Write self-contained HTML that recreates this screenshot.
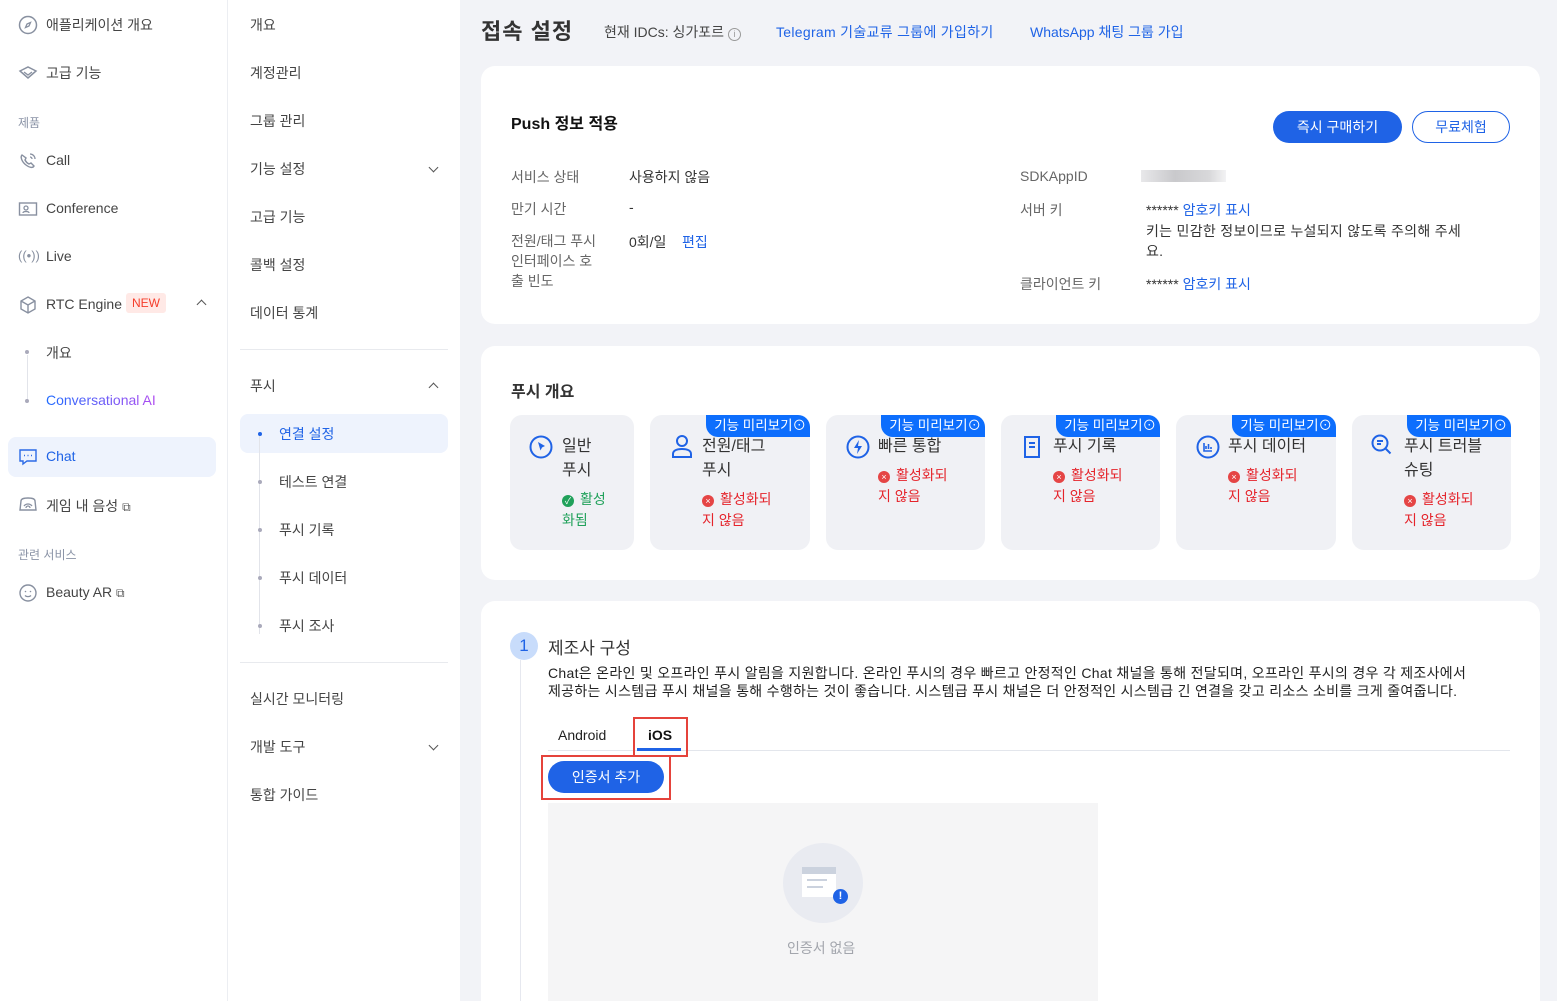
<!DOCTYPE html>
<html><head><meta charset="utf-8"><style>
*{box-sizing:border-box;margin:0;padding:0}
html,body{width:1557px;height:1001px;overflow:hidden}
body{background:#f2f3f7;font-family:"Liberation Sans","Noto Sans CJK KR",sans-serif;font-size:14px;color:#333;position:relative}
.a{position:absolute;white-space:nowrap}
#s1{position:absolute;left:0;top:0;width:228px;height:1001px;background:#fff;border-right:1px solid #eceef2}
#s2{position:absolute;left:228px;top:0;width:232px;height:1001px;background:#fff}
.n1{position:absolute;left:46px;font-size:14px;color:#444}
.ic{position:absolute;left:18px;width:20px;height:20px}
.n2{position:absolute;left:250px;font-size:14px;color:#444}
.n3{position:absolute;left:279px;font-size:14px;color:#444}
.dot{position:absolute;width:4px;height:4px;border-radius:2px;background:#aab}
.card{position:absolute;left:481px;width:1059px;background:#fff;border-radius:14px}
.lbl{color:#666}
.fc{position:absolute;top:415px;height:135px;background:#f0f1f5;border-radius:12px}
.tag{position:absolute;right:0;top:0;background:#0d6efd;color:#fff;font-size:13.5px;padding:2px 4px 2px 8px;border-radius:0 12px 0 12px;height:22px;line-height:18px}
.ft{position:absolute;left:52px;top:20px;font-size:16px;color:#333;line-height:24px}
.st{position:absolute;font-size:14px;color:#e5242b;line-height:21px}
.x{display:inline-block;width:12px;height:12px;border-radius:6px;background:#e54545;color:#fff;font-size:9px;line-height:12px;text-align:center;margin-right:6px;vertical-align:0}
.chev{position:absolute;width:7px;height:7px;border-right:1.5px solid #555;border-bottom:1.5px solid #555}
</style></head><body>
<div id="s1">
<svg class="ic" style="top:15px" viewBox="0 0 20 20"><circle cx="10" cy="10" r="8.5" fill="none" stroke="#8890a0" stroke-width="1.5"/><path d="M12.5 7.5 11 11 7.5 12.5 9 9z" fill="none" stroke="#8890a0" stroke-width="1.3"/></svg>
<div class="n1" style="top:15px">애플리케이션 개요</div>
<svg class="ic" style="top:63px" viewBox="0 0 20 20"><path d="M2 8l8-4 8 4-8 7z" fill="none" stroke="#8890a0" stroke-width="1.5"/><path d="M6 9l4 3 4-3" fill="none" stroke="#8890a0" stroke-width="1.3"/></svg>
<div class="n1" style="top:63px">고급 기능</div>
<div class="a" style="left:18px;top:114px;font-size:12px;color:#8a93a6">제품</div>
<svg class="ic" style="top:151px" viewBox="0 0 20 20"><path d="M4 4c-2 2 0 7 4 10s7 3 8 1l-3-3-2 1c-2-1-3-2-4-4l1-2z" fill="none" stroke="#8890a0" stroke-width="1.4"/><path d="M12 3a5 5 0 0 1 5 5M12 6a2 2 0 0 1 2 2" fill="none" stroke="#8890a0" stroke-width="1.3"/></svg>
<div class="n1" style="top:152px">Call</div>
<svg class="ic" style="top:199px" viewBox="0 0 20 20"><rect x="1.5" y="4" width="17" height="12" fill="none" stroke="#8890a0" stroke-width="1.4"/><circle cx="8" cy="9" r="2" fill="none" stroke="#8890a0" stroke-width="1.3"/><path d="M5 14c0-2 6-2 6 0" fill="none" stroke="#8890a0" stroke-width="1.3"/></svg>
<div class="n1" style="top:200px">Conference</div>
<div class="a" style="left:18px;top:248px;font-size:13px;color:#8890a0">((•))</div>
<div class="n1" style="top:248px">Live</div>
<svg class="ic" style="top:295px" viewBox="0 0 20 20"><path d="M10 2l7 4v8l-7 4-7-4V6z M3 6l7 4 7-4 M10 10v8" fill="none" stroke="#8890a0" stroke-width="1.4"/></svg>
<div class="n1" style="top:296px">RTC Engine</div>
<div class="a" style="left:126px;top:293px;background:#ffe9e6;color:#f53d2b;font-size:12px;padding:3px 6px;border-radius:3px">NEW</div>
<div class="chev" style="left:198px;top:301px;transform:rotate(-135deg)"></div>
<div style="position:absolute;left:27px;top:355px;width:1px;height:45px;background:#e2e4ea"></div>
<div class="dot" style="left:25px;top:350px"></div><div class="n1" style="top:343px">개요</div>
<div class="dot" style="left:25px;top:399px"></div><div class="n1" style="top:392px;background:linear-gradient(90deg,#1f6bff,#b04cf0);-webkit-background-clip:text;color:transparent">Conversational AI</div>
<div style="position:absolute;left:8px;top:437px;width:208px;height:40px;background:#eef3fd;border-radius:8px"></div>
<svg class="ic" style="top:447px" viewBox="0 0 20 20"><path d="M2 3h16v11H9l-4 3v-3H2z" fill="none" stroke="#2b6ae6" stroke-width="1.4"/><path d="M6 8.5h1M9.5 8.5h1M13 8.5h1" stroke="#2b6ae6" stroke-width="1.5"/></svg>
<div class="n1" style="top:448px;color:#1f63e6">Chat</div>
<svg class="ic" style="top:495px" viewBox="0 0 20 20"><path d="M2 15l1-9c0-2 2-3 7-3s7 1 7 3l1 9z" fill="none" stroke="#8890a0" stroke-width="1.4"/><path d="M6 11a5 5 0 0 1 8 0M8 13a2 2 0 0 1 4 0" fill="none" stroke="#8890a0" stroke-width="1.3"/></svg>
<div class="n1" style="top:496px">게임 내 음성 <span style="font-size:12px;color:#555">⧉</span></div>
<div class="a" style="left:18px;top:546px;font-size:12px;color:#8a93a6">관련 서비스</div>
<svg class="ic" style="top:583px" viewBox="0 0 20 20"><circle cx="10" cy="10" r="8" fill="none" stroke="#8890a0" stroke-width="1.4"/><circle cx="7.5" cy="8.5" r=".8" fill="#8890a0"/><circle cx="12.5" cy="8.5" r=".8" fill="#8890a0"/><path d="M7 12.5c1.5 1.5 4.5 1.5 6 0" fill="none" stroke="#8890a0" stroke-width="1.3"/></svg>
<div class="n1" style="top:584px">Beauty AR <span style="font-size:12px;color:#555">⧉</span></div>
</div>
<div id="s2"></div>
<div class="n2" style="top:15px">개요</div>
<div class="n2" style="top:63px">계정관리</div>
<div class="n2" style="top:111px">그룹 관리</div>
<div class="n2" style="top:159px">기능 설정</div><div class="chev" style="left:430px;top:164px;transform:rotate(45deg)"></div>
<div class="n2" style="top:207px">고급 기능</div>
<div class="n2" style="top:255px">콜백 설정</div>
<div class="n2" style="top:303px">데이터 통계</div>
<div style="position:absolute;left:240px;top:349px;width:208px;height:1px;background:#e8eaee"></div>
<div class="n2" style="top:376px">푸시</div><div class="chev" style="left:430px;top:384px;transform:rotate(-135deg)"></div>
<div style="position:absolute;left:240px;top:414px;width:208px;height:39px;background:#eef3fd;border-radius:8px"></div>
<div style="position:absolute;left:259px;top:434px;width:1px;height:200px;background:#e2e4ea"></div>
<div class="dot" style="left:258px;top:432px;background:#1f63e6"></div><div class="n3" style="top:424px;color:#1f63e6">연결 설정</div>
<div class="dot" style="left:258px;top:480px"></div><div class="n3" style="top:472px">테스트 연결</div>
<div class="dot" style="left:258px;top:528px"></div><div class="n3" style="top:520px">푸시 기록</div>
<div class="dot" style="left:258px;top:576px"></div><div class="n3" style="top:568px">푸시 데이터</div>
<div class="dot" style="left:258px;top:624px"></div><div class="n3" style="top:616px">푸시 조사</div>
<div style="position:absolute;left:240px;top:662px;width:208px;height:1px;background:#e8eaee"></div>
<div class="n2" style="top:689px">실시간 모니터링</div>
<div class="n2" style="top:737px">개발 도구</div><div class="chev" style="left:430px;top:742px;transform:rotate(45deg)"></div>
<div class="n2" style="top:785px">통합 가이드</div>

<div class="a" style="left:481px;top:14px;font-size:22px;font-weight:bold;color:#333;letter-spacing:1px">접속 설정</div>
<div class="a" style="left:604px;top:22px;font-size:14px;color:#444">현재 IDCs: 싱가포르 <span style="display:inline-block;width:13px;height:13px;border:1px solid #999;border-radius:7px;font-size:9px;line-height:11px;text-align:center;color:#999">i</span></div>
<div class="a" style="left:776px;top:22px;font-size:14px;color:#1f63e6;letter-spacing:0.3px">Telegram 기술교류 그룹에 가입하기</div>
<div class="a" style="left:1030px;top:22px;font-size:14px;color:#1f63e6">WhatsApp 채팅 그룹 가입</div>

<div class="card" style="top:66px;height:258px"></div>
<div class="a" style="left:511px;top:110px;font-size:16px;font-weight:bold;color:#111">Push 정보 적용</div>
<div class="a" style="left:1273px;top:111px;width:129px;height:32px;background:#1f63e6;border-radius:16px;color:#fff;text-align:center;line-height:32px">즉시 구매하기</div>
<div class="a" style="left:1412px;top:111px;width:98px;height:32px;border:1px solid #1f63e6;border-radius:16px;color:#1f63e6;text-align:center;line-height:30px">무료체험</div>
<div class="a lbl" style="left:511px;top:167px">서비스 상태</div><div class="a" style="left:629px;top:167px">사용하지 않음</div>
<div class="a lbl" style="left:511px;top:199px">만기 시간</div><div class="a" style="left:629px;top:199px">-</div>
<div class="a lbl" style="left:511px;top:231px;line-height:20px">전원/태그 푸시<br>인터페이스 호<br>출 빈도</div><div class="a" style="left:629px;top:232px">0회/일 &nbsp;&nbsp;&nbsp;<span style="color:#1f63e6">편집</span></div>
<div class="a lbl" style="left:1020px;top:168px">SDKAppID</div><div class="a" style="left:1141px;top:170px;width:85px;height:12px;background:linear-gradient(90deg,#e8e8ea,#c9c9cc 40%,#d8d8da 80%,#f3f3f4)"></div>
<div class="a lbl" style="left:1020px;top:200px">서버 키</div><div class="a" style="left:1146px;top:200px">****** <span style="color:#1f63e6">암호키 표시</span></div>
<div class="a" style="left:1146px;top:221px;line-height:20px;letter-spacing:0.3px">키는 민감한 정보이므로 누설되지 않도록 주의해 주세<br>요.</div>
<div class="a lbl" style="left:1020px;top:274px">클라이언트 키</div><div class="a" style="left:1146px;top:274px">****** <span style="color:#1f63e6">암호키 표시</span></div>

<div class="card" style="top:346px;height:234px"></div>
<div class="a" style="left:511px;top:378px;font-size:16px;font-weight:bold;color:#333">푸시 개요</div>
<div class="fc" style="left:510px;width:124px"><svg class="a" style="left:19px;top:20px" width="24" height="24" viewBox="0 0 24 24"><circle cx="12" cy="12" r="10.5" fill="none" stroke="#1f63e6" stroke-width="2"/><path d="M9 7l7 4-3 1.5-1.5 3z" fill="#1f63e6"/></svg><div class="ft">일반<br>푸시</div><div class="st" style="left:52px;top:74px;color:#20a15a"><span class="x" style="background:#20a15a">✓</span>활성<br>화됨</div></div>
<div class="fc" style="left:650px;width:160px"><div class="tag">기능 미리보기⊙</div><svg class="a" style="left:20px;top:18px" width="24" height="26" viewBox="0 0 24 26"><circle cx="12" cy="8" r="5" fill="none" stroke="#1f63e6" stroke-width="2"/><path d="M3 24v-3c0-3 3-5 9-5s9 2 9 5v3z" fill="none" stroke="#1f63e6" stroke-width="2"/></svg><div class="ft">전원/태그<br>푸시</div><div class="st" style="left:52px;top:74px"><span class="x">×</span>활성화되<br>지 않음</div></div>
<div class="fc" style="left:826px;width:159px"><div class="tag">기능 미리보기⊙</div><svg class="a" style="left:20px;top:20px" width="24" height="24" viewBox="0 0 24 24"><circle cx="12" cy="12" r="10.5" fill="none" stroke="#1f63e6" stroke-width="2"/><path d="M13 5l-5 8h4l-1 6 5-8h-4z" fill="#1f63e6"/></svg><div class="ft">빠른 통합</div><div class="st" style="left:52px;top:50px"><span class="x">×</span>활성화되<br>지 않음</div></div>
<div class="fc" style="left:1001px;width:159px"><div class="tag">기능 미리보기⊙</div><svg class="a" style="left:22px;top:20px" width="20" height="24" viewBox="0 0 20 24"><rect x="2" y="2" width="14" height="20" fill="none" stroke="#1f63e6" stroke-width="2"/><path d="M6 8h6M6 12h6" stroke="#1f63e6" stroke-width="2"/></svg><div class="ft">푸시 기록</div><div class="st" style="left:52px;top:50px"><span class="x">×</span>활성화되<br>지 않음</div></div>
<div class="fc" style="left:1176px;width:160px"><div class="tag">기능 미리보기⊙</div><svg class="a" style="left:20px;top:20px" width="24" height="24" viewBox="0 0 24 24"><circle cx="12" cy="12" r="10.5" fill="none" stroke="#1f63e6" stroke-width="2"/><path d="M8 8v8h8M10 14v-3M12.5 14v-5M15 14v-2" stroke="#1f63e6" stroke-width="1.6" fill="none"/></svg><div class="ft">푸시 데이터</div><div class="st" style="left:52px;top:50px"><span class="x">×</span>활성화되<br>지 않음</div></div>
<div class="fc" style="left:1352px;width:159px"><div class="tag">기능 미리보기⊙</div><svg class="a" style="left:18px;top:18px" width="24" height="24" viewBox="0 0 24 24"><circle cx="10" cy="10" r="7.5" fill="none" stroke="#1f63e6" stroke-width="2"/><path d="M15.5 15.5l5 5M7 8h6M7 11h4" stroke="#1f63e6" stroke-width="2"/></svg><div class="ft">푸시 트러블<br>슈팅</div><div class="st" style="left:52px;top:74px"><span class="x">×</span>활성화되<br>지 않음</div></div>

<div class="card" style="top:601px;height:400px;border-radius:14px 14px 0 0"></div>
<div class="a" style="left:510px;top:632px;width:28px;height:28px;border-radius:14px;background:#c8dcfb;color:#1f63e6;font-size:17px;text-align:center;line-height:28px">1</div>
<div style="position:absolute;left:520px;top:660px;width:1px;height:341px;background:#e6e8ef"></div>
<div class="a" style="left:548px;top:634px;font-size:17px;color:#333">제조사 구성</div>
<div class="a" style="left:548px;top:664px;font-size:14px;color:#222;line-height:18px;letter-spacing:0.3px">Chat은 온라인 및 오프라인 푸시 알림을 지원합니다. 온라인 푸시의 경우 빠르고 안정적인 Chat 채널을 통해 전달되며, 오프라인 푸시의 경우 각 제조사에서<br>제공하는 시스템급 푸시 채널을 통해 수행하는 것이 좋습니다. 시스템급 푸시 채널은 더 안정적인 시스템급 긴 연결을 갖고 리소스 소비를 크게 줄여줍니다.</div>
<div style="position:absolute;left:548px;top:750px;width:962px;height:1px;background:#e3e6ec"></div>
<div class="a" style="left:558px;top:727px;font-size:14px;color:#222">Android</div>
<div class="a" style="left:648px;top:727px;font-size:14px;font-weight:bold;color:#111">iOS</div>
<div style="position:absolute;left:637px;top:748px;width:44px;height:3px;background:#1f63e6"></div>
<div style="position:absolute;left:633px;top:717px;width:55px;height:40px;border:2px solid #e5433b"></div>
<div class="a" style="left:548px;top:761px;width:116px;height:32px;border-radius:16px;background:#1f63e6;color:#fff;text-align:center;line-height:32px">인증서 추가</div>
<div style="position:absolute;left:541px;top:755px;width:130px;height:45px;border:2px solid #e5433b"></div>
<div style="position:absolute;left:548px;top:803px;width:550px;height:198px;background:#f5f5f6"></div>
<div style="position:absolute;left:783px;top:843px;width:80px;height:80px;border-radius:40px;background:#e9ebf1"></div>
<div style="position:absolute;left:802px;top:867px;width:34px;height:30px;background:#fff;border-top:7px solid #cbd2de"></div>
<div style="position:absolute;left:807px;top:879px;width:20px;height:2px;background:#cbd2de"></div>
<div style="position:absolute;left:807px;top:886px;width:16px;height:2px;background:#cbd2de"></div>
<div class="a" style="left:833px;top:889px;width:15px;height:15px;border-radius:8px;background:#1f63e6;color:#fff;font-size:11px;font-weight:bold;text-align:center;line-height:15px">!</div>
<div class="a" style="left:787px;top:938px;font-size:14px;color:#a3a6ad">인증서 없음</div>
</body></html>
